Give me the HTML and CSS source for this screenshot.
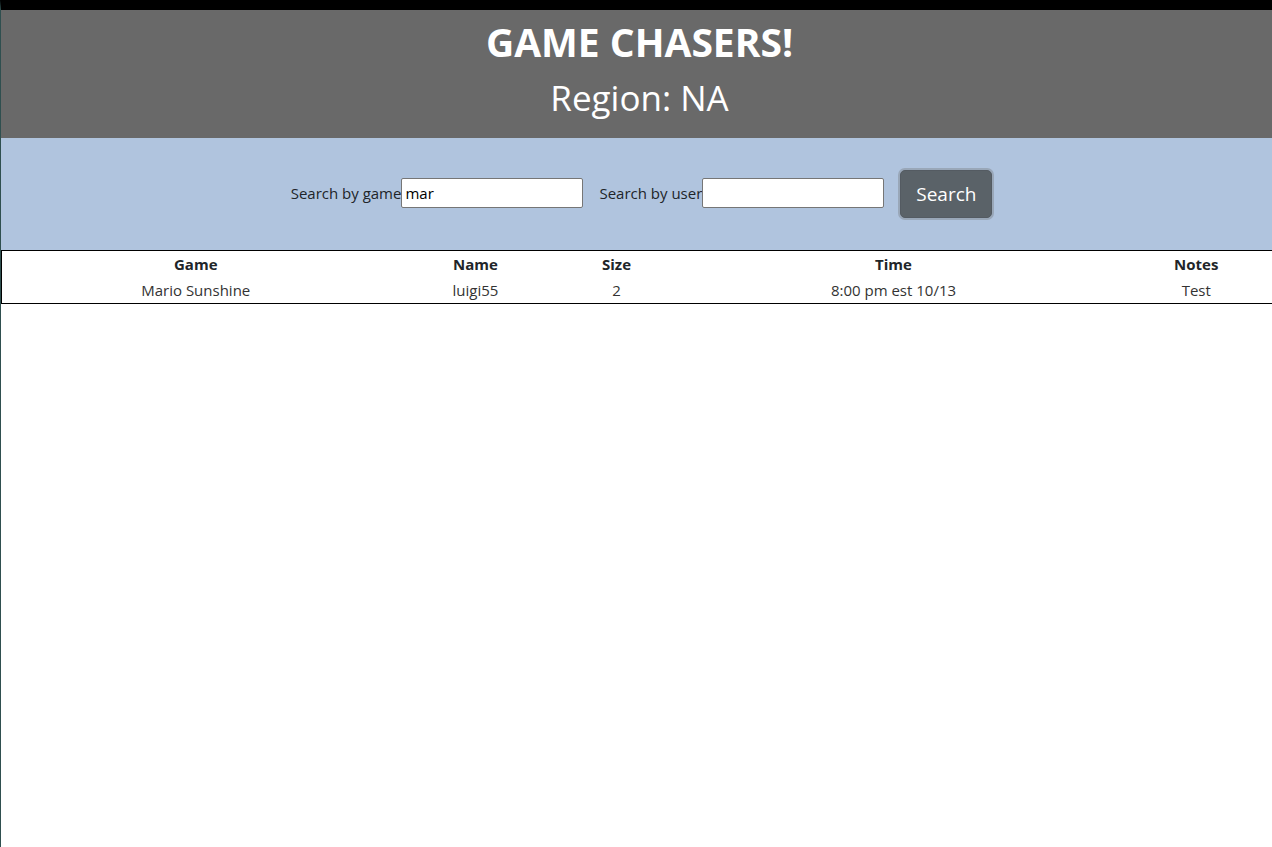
FILE: index.html
```html
<!DOCTYPE html>
<html lang="en">
<head>
<meta charset="utf-8">
<title>Game Chasers</title>
<link rel="stylesheet" href="styles.css">
</head>
<body>
<header class="banner">
  <h1 class="title">GAME CHASERS!</h1>
  <h2 class="region">Region: NA</h2>
</header>
<section class="search">
  <form class="search-form">
    <label class="field">Search by game<input class="text-input" type="text" value="mar"></label>
    <label class="field">Search by user<input class="text-input" type="text" value=""></label>
    <button class="btn" type="button">Search</button>
  </form>
</section>
<table class="games">
  <colgroup>
    <col class="c-game"><col class="c-name"><col class="c-size"><col class="c-time"><col class="c-notes">
  </colgroup>
  <thead>
    <tr><th>Game</th><th>Name</th><th>Size</th><th>Time</th><th>Notes</th></tr>
  </thead>
  <tbody>
    <tr><td>Mario Sunshine</td><td>luigi55</td><td>2</td><td>8:00 pm est 10/13</td><td>Test</td></tr>
  </tbody>
</table>
</body>
</html>
```
FILE: styles.css
```css
html {
  overflow-x: hidden;
}
body {
  margin: 0;
  min-height: 100vh;
  box-sizing: border-box;
  border-top: 10px solid #000;
  border-left: 1px solid #2f4f4f;
  font-family: "Open Sans", "Noto Sans", sans-serif;
  color: #212529;
  font-size: 15px;
  background: #fff;
}
.banner {
  background: #696969;
  color: #fff;
  text-align: center;
  height: 128px;
  box-sizing: border-box;
  padding: 8px 0 0 6px;
}
.title {
  margin: 0;
  font-size: 39px;
  font-weight: 700;
  line-height: 48px;
}
.region {
  margin: 0;
  margin-top: 11px;
  font-size: 35px;
  font-weight: 400;
  line-height: 42px;
}
.search {
  background: #b0c4de;
  height: 112px;
  display: flex;
  align-items: center;
  justify-content: center;
}
.search-form {
  display: flex;
  align-items: center;
  gap: 16px;
  margin-left: 10px;
  margin-top: -2px;
}
.field {
  display: flex;
  align-items: center;
  color: #212529;
}
.text-input {
  width: 182px;
  height: 30px;
  box-sizing: border-box;
  border: 1px solid #767676;
  border-radius: 2px;
  padding: 0 3px;
  font-family: inherit;
  font-size: 15px;
  color: #000;
  background: #fff;
  margin: 0;
}
.btn {
  width: 92px;
  height: 48px;
  background: #5a6268;
  color: #fff;
  border: 1px solid #545b62;
  border-radius: 5px;
  font-family: inherit;
  font-size: 19px;
  box-shadow: 0 0 0 2px rgba(130, 138, 145, 0.5);
  padding: 0;
  margin-top: 2px;
}
.games {
  border-collapse: collapse;
  table-layout: fixed;
  width: 1276px;
  border: 1px solid #000;
  margin: 0;
}
.c-game { width: 388px; }
.c-name { width: 172px; }
.c-size { width: 110px; }
.c-time { width: 444px; }
.c-notes { width: 162px; }
.games th,
.games td {
  text-align: center;
  padding: 0;
  height: 26px;
  font-size: 15px;
  vertical-align: middle;
}
.games th {
  font-weight: 700;
}
.games td {
  color: #333;
}
```
